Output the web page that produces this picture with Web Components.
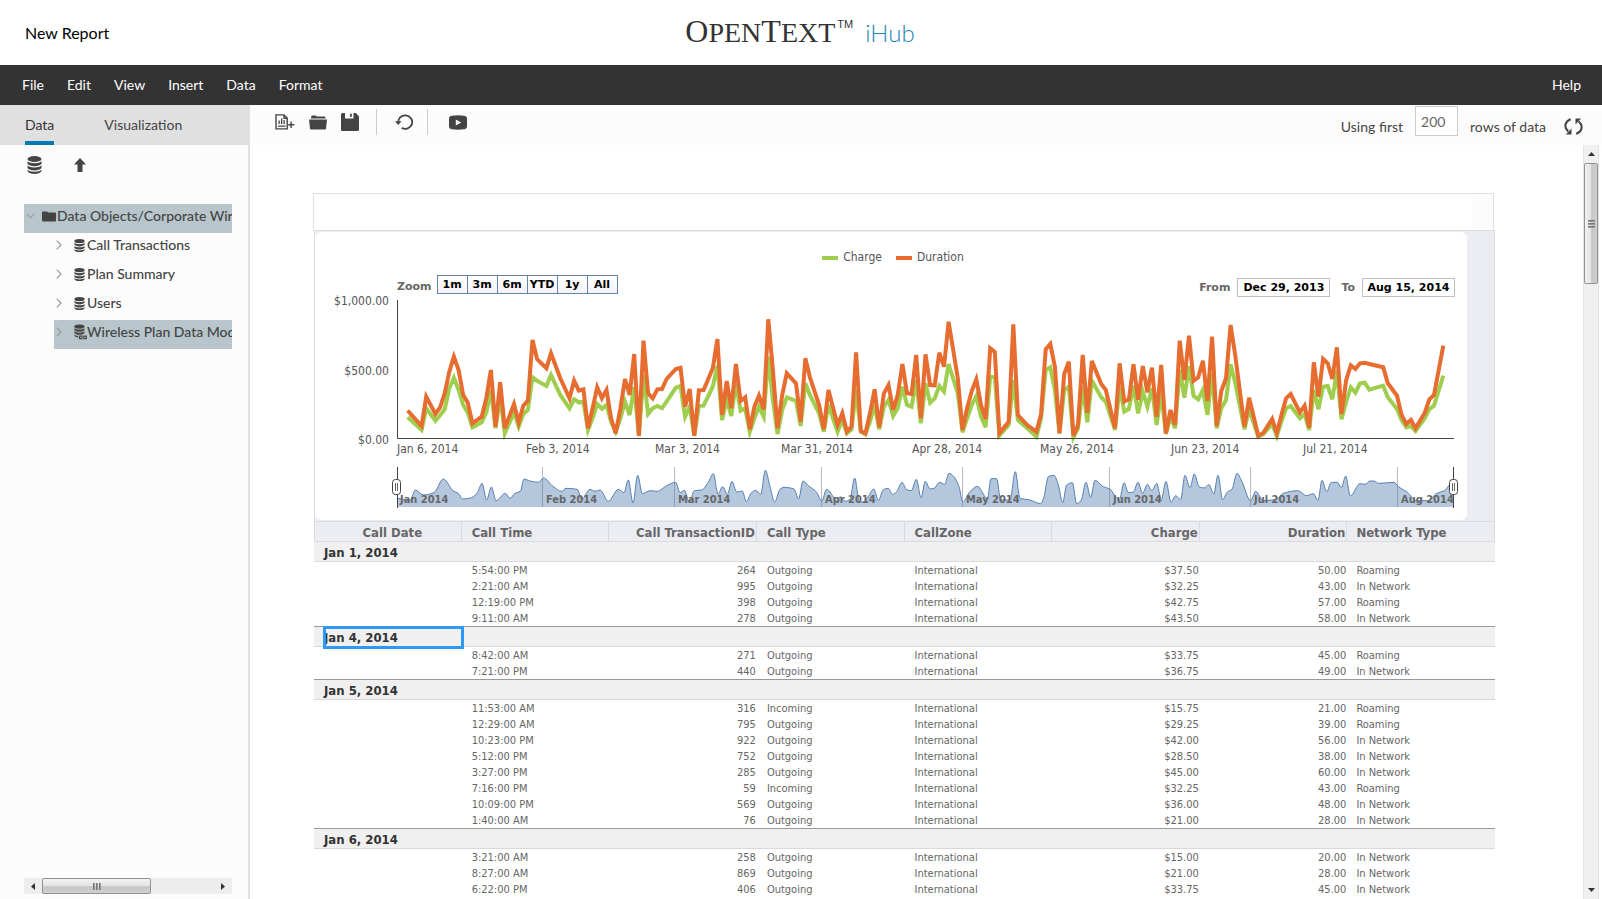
<!DOCTYPE html>
<html lang="en">
<head>
<meta charset="utf-8">
<title>New Report - iHub</title>
<style>
    html, body {
        margin: 0;
        height: 100%;
    }
    body {
        font-family: Lato, "Open Sans", sans-serif;
        font-size: 14px;
        color: #444;
        background: #fff;
        overflow: hidden;
    }
</style>
</head>
<body>
<ih-app>
    <ih-header slot="header" report="New Report"></ih-header>
    <ih-menubar slot="menu">
        <a href="#file">File</a>
        <a href="#edit">Edit</a>
        <a href="#view">View</a>
        <a href="#insert">Insert</a>
        <a href="#data">Data</a>
        <a href="#format">Format</a>
        <a href="#help" slot="end">Help</a>
    </ih-menubar>
    <ih-sidebar slot="side">
        <ih-tree-item icon="folder" open selected>Data Objects/Corporate Wireless</ih-tree-item>
        <ih-tree-item icon="db" level="1">Call Transactions</ih-tree-item>
        <ih-tree-item icon="db" level="1">Plan Summary</ih-tree-item>
        <ih-tree-item icon="db" level="1">Users</ih-tree-item>
        <ih-tree-item icon="dblink" level="1" selected>Wireless Plan Data Model</ih-tree-item>
    </ih-sidebar>
    <ih-toolbar slot="tools"></ih-toolbar>
    <ih-report>
        <ih-chart slot="chart"></ih-chart>
        <ih-call-table></ih-call-table>
    </ih-report>
</ih-app>

<script>
    const icons = {
        db: ['0 0 15 18', `<ellipse cx="7.5" cy="3" rx="7" ry="3"/>
            <path d="M.5 5.200c2 2.600 12 2.600 14 0v2.600c-1.500 3.200-12.500 3.200-14 0z"/>
            <path d="M.5 9.600c2 2.600 12 2.600 14 0v2.400c-1.500 3.200-12.500 3.200-14 0z"/>
            <path d="M.5 13.800c2 2.600 12 2.600 14 0v1.200c-1.500 4-12.500 4-14 0z"/>`],
        dblink: ['0 0 18 21', `<ellipse cx="7.5" cy="3" rx="7" ry="3"/>
            <path d="M.5 5.200c2 2.600 12 2.600 14 0v2.600c-1.500 3.200-12.500 3.200-14 0z"/>
            <path d="M.5 9.600c2 2.600 12 2.600 14 0v2.400c-1.500 3.200-12.500 3.200-14 0z"/>
            <path d="M.5 13.800c1 1.400 3 2 5 2v2.200c-2.500-.1-4.500-1-5-3z"/>
            <path d="M7.500 16.200h3.500v3.500H7.500zM13.500 16.200h3.500v3.500h-3.500z" fill="none" stroke="currentColor" stroke-width="1.500"/>`],
        up: ['0 0 12 14', '<path d="M6 0l6 6.500H8.500V14h-5V6.500H0z"/>'],
        folder: ['0 0 14 11', '<path d="M0 1.500Q0 .5 1 .5h3.500q1 0 1.500 1h7q1 0 1 1V9.500q0 1-1 1H1q-1 0-1-1z"/>'],
        open: ['0 0 18 15', `<path d="M2 2.500Q2 .5 3.500 .5h3l1.500 1h7.500q1 0 1 1v1H2z"/>
            <path d="M0 4.500h18l-1 9q-.1 1-1 1H2q-.9 0-1-1z"/>`],
        report: ['0 0 20 16', `<path d="M1 .9h8l3.200 3.200v10.800H1z M9 .9v3.500h3.200" fill="none" stroke="currentColor" stroke-width="1.400"/>
            <path d="M3.500 6.500h1.300V10H3.500zM6 4.500h1.300V10H6zM8.500 6h1.300v4H8.500zM3 11.500h7.500v1.300H3z"/>
            <path d="M15.400 7.500h1.400V10h2.500v1.400h-2.500v2.500h-1.400v-2.500h-2.200V10h2.200z"/>`],
        save: ['0 0 18 18', '<path fill-rule="evenodd" d="M1.500 0H4v5.500h8.500V0H15l3 3.500V16.500q0 1.500-1.500 1.500h-15Q0 18 0 16.500v-15Q0 0 1.500 0zM9 .8h1.800v3H9z"/>'],
        undo: ['0 0 18 16', `<path d="M3.300 9a7 6.700 0 1 1 3.400 4.900" fill="none" stroke="currentColor" stroke-width="1.800"/>
            <path d="M0 7.300h6.600L3.200 11z"/>`],
        play: ['0 0 18 15', '<path fill-rule="evenodd" d="M3 .7q6-.8 12 0q3 .3 3 3v7.600q0 2.700-3 3q-6 .8-12 0q-3-.3-3-3V3.700q0-2.700 3-3zM6.800 4.500v6l5.400-3z"/>'],
        refresh: ['0 0 19 17', `<path d="M6.800 1.200C.5 3.500-.2 9.500 4.200 13.500M12.200 15.800c6.300-2.300 7-8.300 2.600-12.300" fill="none" stroke="currentColor" stroke-width="2.100"/>
            <path d="M7.500 10.500V16.500H1.800zM11.500 6.500V.5h5.700z"/>`],
        right: ['0 0 6 10', '<path d="M.7 .7L5 5 .7 9.300" fill="none" stroke="#999" stroke-width="1.200"/>'],
        down: ['0 0 10 6', '<path d="M.7 .7L5 5 9.300 .7" fill="none" stroke="#999" stroke-width="1.200"/>']
    };

    class IhIcon extends HTMLElement {
        connectedCallback() {
            let s = this.shadowRoot || this.attachShadow({ mode: 'open' });
            let [box, body] = icons[this.getAttribute('name')];
            s.innerHTML = `
            <style>
                :host { display: block; flex: none; color: #444; }
                svg { display: block; width: 100%; height: 100%; }
            </style>
            <svg viewBox="${box}" fill="currentColor" aria-hidden="true">${body}</svg>`;
        }
    }
    customElements.define('ih-icon', IhIcon);

    class IhApp extends HTMLElement {
        constructor() {
            super();
            this.attachShadow({ mode: 'open' }).innerHTML = `
            <style>
                :host {
                    display: grid;
                    grid-template: 65px 40px 40px minmax(0, 1fr) / 250px minmax(0, 1fr);
                    height: 100vh;
                }
                slot[name=header]::slotted(*), slot[name=menu]::slotted(*) { grid-column: 1 / 3; }
                slot[name=side]::slotted(*) { grid-row: 3 / 5; }
            </style>
            <slot name="header"></slot>
            <slot name="menu"></slot>
            <slot name="side"></slot>
            <slot name="tools"></slot>
            <slot></slot>`;
        }
    }
    customElements.define('ih-app', IhApp);

    class IhHeader extends HTMLElement {
        connectedCallback() {
            let s = this.attachShadow({ mode: 'open' });
            s.innerHTML = `
            <style>
                :host {
                    display: grid;
                    grid-template-columns: 1fr auto 1fr;
                    align-items: center;
                    padding: 0 27px 0 25px;
                    color: #000;
                }
                h1 { margin: 0; font-size: 16px; font-weight: 400; line-height: 20px; }
                .logo {
                    display: flex;
                    align-items: baseline;
                    line-height: 36px;
                    padding-bottom: 2px;
                    color: #333;
                }
                .name { font-family: "Liberation Serif", serif; font-size: 28px; }
                .name b { font-size: 32px; font-weight: 400; }
                sup {
                    align-self: flex-start;
                    margin: 6px 12px 0 2px;
                    font: 11px/11px "Liberation Sans", sans-serif;
                }
                .product { font-size: 24px; font-weight: 300; color: #1a86b9; }
            </style>
            <h1></h1>
            <div class="logo"><span class="name"><b>O</b>PEN<b>T</b>EXT</span><sup>TM</sup><span class="product">iHub</span></div>`;
            s.querySelector('h1').textContent = this.getAttribute('report');
        }
    }
    customElements.define('ih-header', IhHeader);

    class IhMenubar extends HTMLElement {
        constructor() {
            super();
            this.attachShadow({ mode: 'open' }).innerHTML = `
            <style>
                :host {
                    display: flex;
                    justify-content: space-between;
                    align-items: center;
                    padding: 0 21px 0 22px;
                    background: #333;
                }
                nav { display: flex; gap: 23px; }
                ::slotted(a) { color: #fff; font-size: 14px; line-height: 20px; text-decoration: none; }
            </style>
            <nav><slot></slot></nav>
            <slot name="end"></slot>`;
        }
    }
    customElements.define('ih-menubar', IhMenubar);

    class IhTreeItem extends HTMLElement {
        connectedCallback() {
            let s = this.attachShadow({ mode: 'open' });
            let icon = this.getAttribute('icon');
            let open = this.hasAttribute('open');
            s.innerHTML = `
            <style>
                :host { display: block; overflow: hidden; }
                :host([level="1"]) { margin-left: 30px; }
                :host([selected]) { background: #b8c6cb; }
                a {
                    display: flex;
                    align-items: center;
                    height: 24px;
                    padding: 0 0 5px 2px;
                    color: #444;
                    font-size: 14px;
                    font-weight: 500;
                    line-height: 20px;
                    text-decoration: none;
                    white-space: nowrap;
                }
                .arrow { width: 6px; height: 10px; margin-right: 12px; }
                .arrow.open { width: 9px; height: 6px; margin-right: 7px; }
                .icon { width: 11px; height: 15px; margin-right: 2px; }
                .icon.folder { width: 14px; height: 11px; margin-right: 1px; }
                .icon.dblink { width: 13px; height: 16px; margin-right: 0; }
            </style>
            <a href="#item">
                <ih-icon class="arrow ${open ? 'open' : ''}" name="${open ? 'down' : 'right'}"></ih-icon>
                <ih-icon class="icon ${icon}" name="${icon}"></ih-icon>
                <span><slot></slot></span>
            </a>`;
        }
    }
    customElements.define('ih-tree-item', IhTreeItem);

    class IhScrollbar extends HTMLElement {
        connectedCallback() {
            let s = this.attachShadow({ mode: 'open' });
            this.setAttribute('role', 'scrollbar');
            s.innerHTML = `
            <style>
                :host {
                    display: flex;
                    box-sizing: border-box;
                    height: 16px;
                    background: #ededed;
                }
                :host([vertical]) {
                    flex-direction: column;
                    width: 16px;
                    height: auto;
                    border: solid #e3e3e3;
                    border-width: 0 1px;
                    background: #f0f0f0;
                }
                .btn { flex: none; width: 18px; height: 16px; display: grid; place-items: center; }
                :host([vertical]) .btn { width: 14px; height: 18px; }
                .btn svg { display: block; fill: #333; }
                .thumb {
                    box-sizing: border-box;
                    width: var(--thumb);
                    border: 1px solid #929292;
                    border-radius: 2px;
                    background: linear-gradient(#f3f3f3, #e2e2e2 50%, #c6c6c9 55%, #cfcfcf);
                    display: flex;
                    gap: 1px;
                    align-items: center;
                    justify-content: center;
                }
                :host([vertical]) .thumb {
                    width: auto;
                    height: var(--thumb);
                    flex-direction: column;
                    background: linear-gradient(90deg, #f3f3f3, #e2e2e2 50%, #c6c6c9 55%, #cfcfcf);
                }
                i { width: 2px; height: 7px; background: linear-gradient(90deg, #666, #aaa); }
                :host([vertical]) i { width: 7px; height: 2px; background: linear-gradient(#666, #aaa); }
                .rest { flex: 1; }
            </style>
            ${this.hasAttribute('vertical') ? `
            <span class="btn"><svg width="7" height="4"><path d="M0 4h7L3.500 0z"/></svg></span>
            <span class="thumb"><i></i><i></i><i></i></span><span class="rest"></span>
            <span class="btn"><svg width="7" height="4"><path d="M0 0h7L3.500 4z"/></svg></span>` : `
            <span class="btn"><svg width="4" height="7"><path d="M4 0v7L0 3.500z"/></svg></span>
            <span class="thumb"><i></i><i></i><i></i></span><span class="rest"></span>
            <span class="btn"><svg width="4" height="7"><path d="M0 0v7l4-3.500z"/></svg></span>`}`;
        }
    }
    customElements.define('ih-scrollbar', IhScrollbar);

    class IhSidebar extends HTMLElement {
        constructor() {
            super();
            this.attachShadow({ mode: 'open' }).innerHTML = `
            <style>
                :host {
                    display: flex;
                    flex-direction: column;
                    border-right: 2px solid #e0e0e0;
                    background: #fcfcfc;
                    min-height: 0;
                }
                button { border: 0; padding: 0; background: none; font: inherit; color: inherit; }
                .tabs {
                    display: flex;
                    gap: 50px;
                    height: 40px;
                    padding-left: 25px;
                    background: #e0e0e0;
                    font-size: 14px;
                    line-height: 20px;
                }
                .tabs button { border: solid transparent; border-width: 4px 0; }
                .tabs .on { border-bottom-color: #0079b0; color: #333; }
                .actions { display: flex; align-items: center; gap: 32px; height: 35px; padding: 2px 28px 0 27px; }
                .actions .db { width: 15px; height: 18px; }
                .actions .up { width: 12px; height: 14px; }
                .tree { flex: 1; margin: 22px 16px 0 24px; overflow: hidden; }
                ih-scrollbar { --thumb: 109px; margin: 0 16px 5px 24px; }
            </style>
            <div class="tabs" role="tablist">
                <button class="on" role="tab">Data</button>
                <button role="tab">Visualization</button>
            </div>
            <div class="actions">
                <button aria-label="Data sources"><ih-icon class="db" name="db"></ih-icon></button>
                <button aria-label="Up"><ih-icon class="up" name="up"></ih-icon></button>
            </div>
            <div class="tree"><slot></slot></div>
            <ih-scrollbar></ih-scrollbar>`;
        }
    }
    customElements.define('ih-sidebar', IhSidebar);

    class IhToolbar extends HTMLElement {
        constructor() {
            super();
            this.attachShadow({ mode: 'open' }).innerHTML = `
            <style>
                :host {
                    display: flex;
                    justify-content: space-between;
                    padding: 0 19px 0 25px;
                    background: #fcfcfc;
                }
                button { border: 0; padding: 0; background: none; }
                .tools { display: flex; align-items: center; height: 34px; gap: 14px; }
                hr { width: 1px; height: 26px; margin: 0; border: 0; background: #ccc; }
                .save { margin-right: 3px; }
                .undo { margin-left: 4px; }
                .play { margin-left: 7px; }
                .report ih-icon { width: 20px; height: 16px; }
                .open ih-icon, .play ih-icon { width: 18px; height: 15px; }
                .save ih-icon { width: 18px; height: 18px; }
                .undo ih-icon { width: 18px; height: 16px; }
                .rows { display: flex; align-items: center; gap: 12px; font-size: 14px; line-height: 20px; }
                .rows label { padding-top: 4px; }
                input {
                    box-sizing: border-box;
                    width: 43px;
                    height: 30px;
                    margin-bottom: 8px;
                    padding: 0 0 0 5px;
                    border: 1px solid #ccc;
                    background: #fff;
                    font: 14px Lato, sans-serif;
                    color: #666;
                }
                .refresh { margin: 2px 0 0 6px; }
                .refresh ih-icon { width: 19px; height: 17px; }
            </style>
            <div class="tools">
                <button class="report" aria-label="New report"><ih-icon name="report"></ih-icon></button>
                <button class="open" aria-label="Open"><ih-icon name="open"></ih-icon></button>
                <button class="save" aria-label="Save"><ih-icon name="save"></ih-icon></button>
                <hr>
                <button class="undo" aria-label="Undo"><ih-icon name="undo"></ih-icon></button>
                <hr>
                <button class="play" aria-label="Preview"><ih-icon name="play"></ih-icon></button>
            </div>
            <div class="rows">
                <label for="rows">Using first</label>
                <input id="rows" value="200">
                <label for="rows">rows of data</label>
                <button class="refresh" aria-label="Refresh"><ih-icon name="refresh"></ih-icon></button>
            </div>`;
        }
    }
    customElements.define('ih-toolbar', IhToolbar);

    class IhReport extends HTMLElement {
        constructor() {
            super();
            this.attachShadow({ mode: 'open' }).innerHTML = `
            <style>
                :host { display: flex; min-height: 0; padding-right: 3px; }
                .page { flex: 1; min-width: 0; overflow: hidden; padding: 48px 88px 0 64px; }
                .title {
                    display: flex;
                    justify-content: flex-end;
                    height: 36px;
                    margin: 0 1px 0 -1px;
                    border: solid #e0e0e0;
                    border-width: 1px 1px 0;
                }
                .title span { width: 20px; height: 33px; background: #fcfcfc; }
                .band { border: solid #dcdce0; border-width: 1px 1px 0; background: #ecedf3; padding: 1px 27px 1px 0; }
                ih-scrollbar { --thumb: 121px; }
            </style>
            <div class="page">
                <div class="title"><span></span></div>
                <div class="band"><slot name="chart"></slot></div>
                <slot></slot>
            </div>
            <ih-scrollbar vertical></ih-scrollbar>`;
        }
    }
    customElements.define('ih-report', IhReport);

    // [day, duration, charge], on the plot grid: 445 is $0.00 and 30 is $1,000.00
    const samples = [
        [0,362,382],[3,408,420],[4,320,355],[6,372,392],[7,352,376],[8,310,358],[9,245,295],[10,200,263],[11,240,300],
        [12,315,345],[13,338,368],[14,400,412],[16,380,397],[17,325,368],[18,240,300],[19,410,415],[20,277,320],[21,415,430],
        [23,342,368],[24,397,410],[25,347,372],[26,332,360],[27,150,262],[28,208,272],[30,235,288],[31,190,255],[33,265,315],
        [35,325,355],[36,272,328],[37,302,337],[38,298,335],[39,415,420],[40,355,385],[41,292,342],[42,325,356],[43,300,345],
        [44,385,395],[45,430,425],[46,355,385],[47,267,335],[48,315,375],[49,192,290],[50,437,438],[51,152,255],[52,310,372],
        [53,325,355],[54,298,348],[55,297,355],[56,267,335],[58,237,293],[59,233,288],[60,350,380],[61,297,350],[62,437,437],
        [63,301,348],[64,300,347],[66,235,290],[67,147,227],[68,375,390],[69,273,330],[70,355,378],[71,222,280],[72,333,362],
        [73,322,355],[74,418,425],[75,350,385],[76,317,350],[77,358,380],[78,88,200],[79,240,330],[80,415,432],[81,315,360],
        [82,250,322],[84,280,333],[85,395,408],[86,205,280],[87,262,315],[89,345,370],[90,418,425],[91,300,345],[93,405,425],
        [94,370,390],[95,425,430],[96,410,418],[97,187,300],[98,423,425],[99,430,433],[100,370,395],[101,298,345],[102,412,418],
        [103,310,350],[104,285,330],[105,360,378],[106,315,355],[107,222,290],[108,310,345],[109,312,350],[110,195,270],
        [111,385,400],[112,193,280],[113,285,338],[114,286,325],[115,188,288],[116,230,305],[117,95,222],[119,265,310],
        [120,420,427],[121,355,385],[122,303,345],[123,268,318],[124,345,380],[125,387,412],[126,175,260],[127,186,262],
        [128,430,437],[130,395,405],[131,103,270],[132,375,390],[134,405,415],[136,425,440],[137,372,385],[138,178,240],
        [139,162,232],[140,230,300],[141,430,430],[142,252,300],[143,215,290],[144,437,442],[145,405,415],[146,195,290],
        [147,368,397],[148,213,272],[150,282,322],[151,300,335],[153,415,420],[154,220,290],[155,335,365],[156,328,357],
        [157,223,287],[158,330,370],[159,228,305],[160,307,350],[161,233,295],[162,380,405],[163,225,310],[164,430,432],
        [165,360,380],[166,405,415],[167,152,238],[168,270,323],[169,137,228],[170,272,318],[171,262,328],[172,212,300],
        [173,333,375],[174,140,250],[175,408,415],[176,303,355],[177,265,330],[178,105,223],[179,195,278],[181,410,418],
        [182,323,357],[184,437,440],[185,430,433],[187,387,402],[188,430,438],[189,375,395],[190,325,355],[191,312,348],
        [193,367,385],[194,347,372],[195,413,420],[196,217,300],[197,320,358],[198,207,290],[199,220,288],[200,267,328],
        [201,172,242],[202,372,388],[203,270,335],[204,226,292],[205,237,308],[206,220,280],[207,218,278],[208,222,299],
        [211,232,287],[212,280,322],[214,317,357],[215,375,390],[216,402,412],[217,390,408],[218,415,423],[220,368,385],
        [221,328,357],[222,315,347],[224,167,257]
    ];
    // grouped samples of the overview strip, three units to a pixel
    const overview = [
        [22,625],[60,632],[76,600],[100,615],[132,608],[160,567],[190,603],[205,610],[218,627],[245,623],[262,608],[276,580],
        [290,630],[304,591],[318,632],[346,610],[360,625],[375,610],[391,604],[402,567],[420,573],[446,577],[460,564],
        [490,590],[515,604],[528,595],[562,598],[575,628],[600,598],[615,604],[630,600],[655,634],[685,598],[702,608],
        [715,570],[729,639],[743,556],[757,611],[780,602],[802,604],[830,587],[857,577],[870,608],[883,601],[898,637],
        [913,602],[935,600],[955,577],[970,551],[984,612],[998,590],[1012,613],[1026,574],[1040,606],[1057,603],[1069,635],
        [1083,610],[1097,601],[1112,613],[1126,541],[1140,590],[1154,636],[1170,598],[1182,592],[1212,597],[1226,626],
        [1239,573],[1255,587],[1280,607],[1295,633],[1310,598],[1330,620],[1340,632],[1351,620],[1365,634],[1380,628],
        [1394,564],[1408,635],[1422,636],[1436,618],[1451,597],[1465,631],[1480,599],[1495,595],[1508,613],[1520,605],
        [1536,577],[1550,599],[1564,602],[1579,568],[1593,623],[1606,574],[1620,597],[1632,595],[1649,577],[1664,583],
        [1677,550],[1690,558],[1707,590],[1718,635],[1740,605],[1763,589],[1780,612],[1792,628],[1803,566],[1820,566],
        [1832,630],[1860,630],[1876,545],[1890,625],[1920,630],[1952,641],[1962,620],[1975,560],[1992,556],[2005,585],
        [2018,638],[2030,585],[2047,578],[2060,641],[2074,630],[2088,577],[2102,622],[2115,571],[2140,590],[2160,597],
        [2175,618],[2188,630],[2202,578],[2215,608],[2230,606],[2244,577],[2258,610],[2272,583],[2286,602],[2300,580],
        [2314,628],[2328,574],[2343,637],[2357,617],[2372,628],[2385,556],[2400,593],[2413,552],[2427,590],[2442,594],
        [2457,584],[2471,612],[2484,556],[2498,629],[2512,606],[2526,598],[2541,550],[2555,573],[2582,632],[2597,604],
        [2620,632],[2660,628],[2680,610],[2723,602],[2750,617],[2770,611],[2784,631],[2796,571],[2810,605],[2824,577],
        [2842,577],[2854,593],[2867,558],[2881,618],[2910,581],[2925,583],[2940,573],[2952,573],[2966,580],[3012,577],
        [3025,590],[3052,607],[3080,632],[3115,632],[3140,610],[3162,603],[3190,575]
    ];
    const ticks = [['Jan 6, 2014', 82], ['Feb 3, 2014', 211], ['Mar 3, 2014', 340], ['Mar 31, 2014', 466],
        ['Apr 28, 2014', 597], ['May 26, 2014', 725], ['Jun 23, 2014', 856], ['Jul 21, 2014', 988]];
    const months = [['Jan 2014', 0], ['Feb 2014', 31], ['Mar 2014', 59], ['Apr 2014', 90],
        ['May 2014', 120], ['Jun 2014', 151], ['Jul 2014', 181], ['Aug 2014', 212]];

    // line through the points without overshoot at the peaks
    function smooth(p) {
        let slope = p.map((c, i) => {
            if (!i || i == p.length - 1) return 0;
            let a = (c[1] - p[i - 1][1]) / (c[0] - p[i - 1][0]);
            let b = (p[i + 1][1] - c[1]) / (p[i + 1][0] - c[0]);
            return a * b <= 0 ? 0 : 2 * a * b / (a + b);
        });
        let d = 'M' + p[0];
        for (let i = 1; i < p.length; i++) {
            let [x0, y0] = p[i - 1];
            let [x1, y1] = p[i];
            let t = (x1 - x0) / 3;
            d += `C${x0 + t} ${y0 + slope[i - 1] * t} ${x1 - t} ${y1 - slope[i] * t} ${x1} ${y1}`;
        }
        return d;
    }

    class IhChart extends HTMLElement {
        constructor() {
            super();
            let s = this.attachShadow({ mode: 'open' });
            let line = col => samples.map(r => `${(92.700 + 4.623 * r[0]).toFixed(1)},${(r[col] / 3 - 8).toFixed(1)}`).join(' ');
            let navX = day => Math.round(81 + 4.720 * day);
            let nav = smooth(overview.map(p => [75 + p[0] / 3, p[1] / 3 - 8]));
            s.innerHTML = `
            <style>
                :host { display: block; border-radius: 6px; background: #fff; padding-top: 17px; }
                .legend {
                    display: flex;
                    justify-content: center;
                    gap: 14px;
                    height: 16px;
                    margin-bottom: 10px;
                    padding-left: 4px;
                    font: 12px/16px "DejaVu Sans Condensed", "DejaVu Sans", sans-serif;
                    color: #555;
                }
                .legend span { display: flex; align-items: center; gap: 5px; }
                .legend span::before { content: ""; width: 16px; height: 4px; margin-top: 2px; background: var(--c); }
                .range {
                    display: flex;
                    justify-content: space-between;
                    height: 22px;
                    margin-bottom: 1px;
                    padding: 0 12px 0 82px;
                    font: bold 11px/19px "DejaVu Sans", sans-serif;
                    color: #666;
                }
                .zoom, .dates { display: flex; align-items: flex-start; }
                .zoom span { margin: 2px 5px 0 0; }
                .dates { align-items: flex-end; }
                button {
                    box-sizing: border-box;
                    width: 31px;
                    height: 19px;
                    margin-right: -1px;
                    padding: 0;
                    border: 1px solid #5f85b0;
                    background: linear-gradient(#fff, #f4f4f6);
                    font: inherit;
                    line-height: 17px;
                    color: #000;
                }
                input {
                    box-sizing: border-box;
                    width: 93px;
                    height: 19px;
                    margin-left: 7px;
                    padding: 0;
                    border: 1px solid #c0c0c0;
                    font: inherit;
                    color: #000;
                    text-align: center;
                }
                label + input + label { margin-left: 11px; }
                svg { display: block; width: 100%; overflow: visible; }
                text { font: 12px "DejaVu Sans Condensed", "DejaVu Sans", sans-serif; fill: #555; }
                .y text { text-anchor: end; }
                .months text { font: bold 11px "DejaVu Sans Condensed", "DejaVu Sans", sans-serif; fill: #666; }
            </style>
            <div class="legend">
                <span style="--c: #9fce4e">Charge</span>
                <span style="--c: #e66c2f">Duration</span>
            </div>
            <div class="range">
                <div class="zoom"><span>Zoom</span>${['1m', '3m', '6m', 'YTD', '1y', 'All'].map(t => `<button>${t}</button>`).join('')}</div>
                <div class="dates">
                    <label for="from">From</label><input id="from" value="Dec 29, 2013">
                    <label for="to">To</label><input id="to" value="Aug 15, 2014">
                </div>
            </div>
            <svg viewBox="0 0 1152 222">
                <g class="y">
                    <text x="74" y="7">$1,000.00</text>
                    <text x="74" y="77">$500.00</text>
                    <text x="74" y="146">$0.00</text>
                </g>
                <polyline points="${line(2)}" fill="none" stroke="#9fce4e" stroke-width="4"/>
                <polyline points="${line(1)}" fill="none" stroke="#e66c2f" stroke-width="4"/>
                <path d="M82.500 2V140.500H1139" fill="none" stroke="#444"/>
                <g>${ticks.map(t => `<text x="${t[1]}" y="155">${t[0]}</text>`).join('')}</g>
                <g class="months">
                    ${months.slice(1).map(m => `<path d="M${navX(m[1]) + .5} 169V209" stroke="#bbb"/>`).join('')}
                    <path d="${nav}V209H82z" fill="#4572a7" fill-opacity=".4"/>
                    <path d="${nav}" fill="none" stroke="#5580b3"/>
                    ${months.map(m => `<text x="${navX(m[1]) + 4}" y="205">${m[0]}</text>`).join('')}
                </g>
                <g stroke="#444" fill="#fff">
                    <path d="M82.500 169V210M1138.500 169V210"/>
                    <rect x="77.500" y="181.500" width="8" height="15" rx="3"/>
                    <rect x="1134.500" y="181.500" width="8" height="15" rx="3"/>
                    <path d="M80.500 185v8M82.500 185v8M1137.500 185v8M1139.500 185v8" stroke="#666"/>
                </g>
            </svg>`;
        }
    }
    customElements.define('ih-chart', IhChart);

    const groups = [
        ['Jan 1, 2014', [
            ['5:54:00 PM', 264, 'Outgoing', '37.50', 50, 'Roaming'],
            ['2:21:00 AM', 995, 'Outgoing', '32.25', 43, 'In Network'],
            ['12:19:00 PM', 398, 'Outgoing', '42.75', 57, 'Roaming'],
            ['9:11:00 AM', 278, 'Outgoing', '43.50', 58, 'In Network']]],
        ['Jan 4, 2014', [
            ['8:42:00 AM', 271, 'Outgoing', '33.75', 45, 'Roaming'],
            ['7:21:00 PM', 440, 'Outgoing', '36.75', 49, 'In Network']]],
        ['Jan 5, 2014', [
            ['11:53:00 AM', 316, 'Incoming', '15.75', 21, 'Roaming'],
            ['12:29:00 AM', 795, 'Outgoing', '29.25', 39, 'Roaming'],
            ['10:23:00 PM', 922, 'Outgoing', '42.00', 56, 'In Network'],
            ['5:12:00 PM', 752, 'Outgoing', '28.50', 38, 'In Network'],
            ['3:27:00 PM', 285, 'Outgoing', '45.00', 60, 'In Network'],
            ['7:16:00 PM', 59, 'Incoming', '32.25', 43, 'Roaming'],
            ['10:09:00 PM', 569, 'Outgoing', '36.00', 48, 'In Network'],
            ['1:40:00 AM', 76, 'Outgoing', '21.00', 28, 'In Network']]],
        ['Jan 6, 2014', [
            ['3:21:00 AM', 258, 'Outgoing', '15.00', 20, 'In Network'],
            ['8:27:00 AM', 869, 'Outgoing', '21.00', 28, 'In Network'],
            ['6:22:00 PM', 406, 'Outgoing', '33.75', 45, 'In Network']]]
    ];

    class IhCallTable extends HTMLElement {
        constructor() {
            super();
            let s = this.attachShadow({ mode: 'open' });
            let row = r => `<tr><td></td><td>${r[0]}</td><td class="n">${r[1]}</td><td>${r[2]}</td><td>International</td>
                <td class="n">$${r[3]}</td><td class="n">${r[4]}.00</td><td>${r[5]}</td></tr>`;
            s.innerHTML = `
            <style>
                :host { display: block; }
                table {
                    width: 100%;
                    table-layout: fixed;
                    border-spacing: 0;
                    font: 11px/14px "DejaVu Sans Condensed", "DejaVu Sans", sans-serif;
                    color: #666;
                }
                th, td { height: 14px; padding: 2px 1px 0 10px; text-align: left; white-space: nowrap; }
                td:last-child, th:last-child { padding-left: 9px; }
                .n { text-align: right; }
                th { height: 16px; padding-top: 3px; font-size: 13px; line-height: 16px; }
                thead th {
                    border: solid #dadbe0;
                    border-width: 1px 1px 1px 0;
                    background: #ecedf3;
                }
                thead th:first-child { border-left-width: 1px; text-align: center; }
                tbody th {
                    border-top: 1px solid #999;
                    border-bottom: 1px solid #d9d9d9;
                    background: #f0f0f0;
                    color: #333;
                }
                tbody:nth-of-type(1) th { border-top: 0; }
                th.selected { position: relative; }
                /* selection frame drawn over the neighbouring borders */
                th.selected::after {
                    content: "";
                    position: absolute;
                    inset: -1px -2px -3px 9px;
                    border: 3px solid #2d98f5;
                }
            </style>
            <table>
                <thead><tr>
                    <th>Call Date</th><th>Call Time</th><th class="n">Call TransactionID</th><th>Call Type</th>
                    <th>CallZone</th><th class="n">Charge</th><th class="n">Duration</th><th>Network Type</th>
                </tr></thead>
                ${groups.map((g, i) => `<tbody>
                    <tr><th class="${i == 1 ? 'selected' : ''}">${g[0]}</th><th colspan="7"></th></tr>
                    ${g[1].map(row).join('')}
                </tbody>`).join('')}
            </table>`;
        }
    }
    customElements.define('ih-call-table', IhCallTable);
</script>
</body>
</html>
